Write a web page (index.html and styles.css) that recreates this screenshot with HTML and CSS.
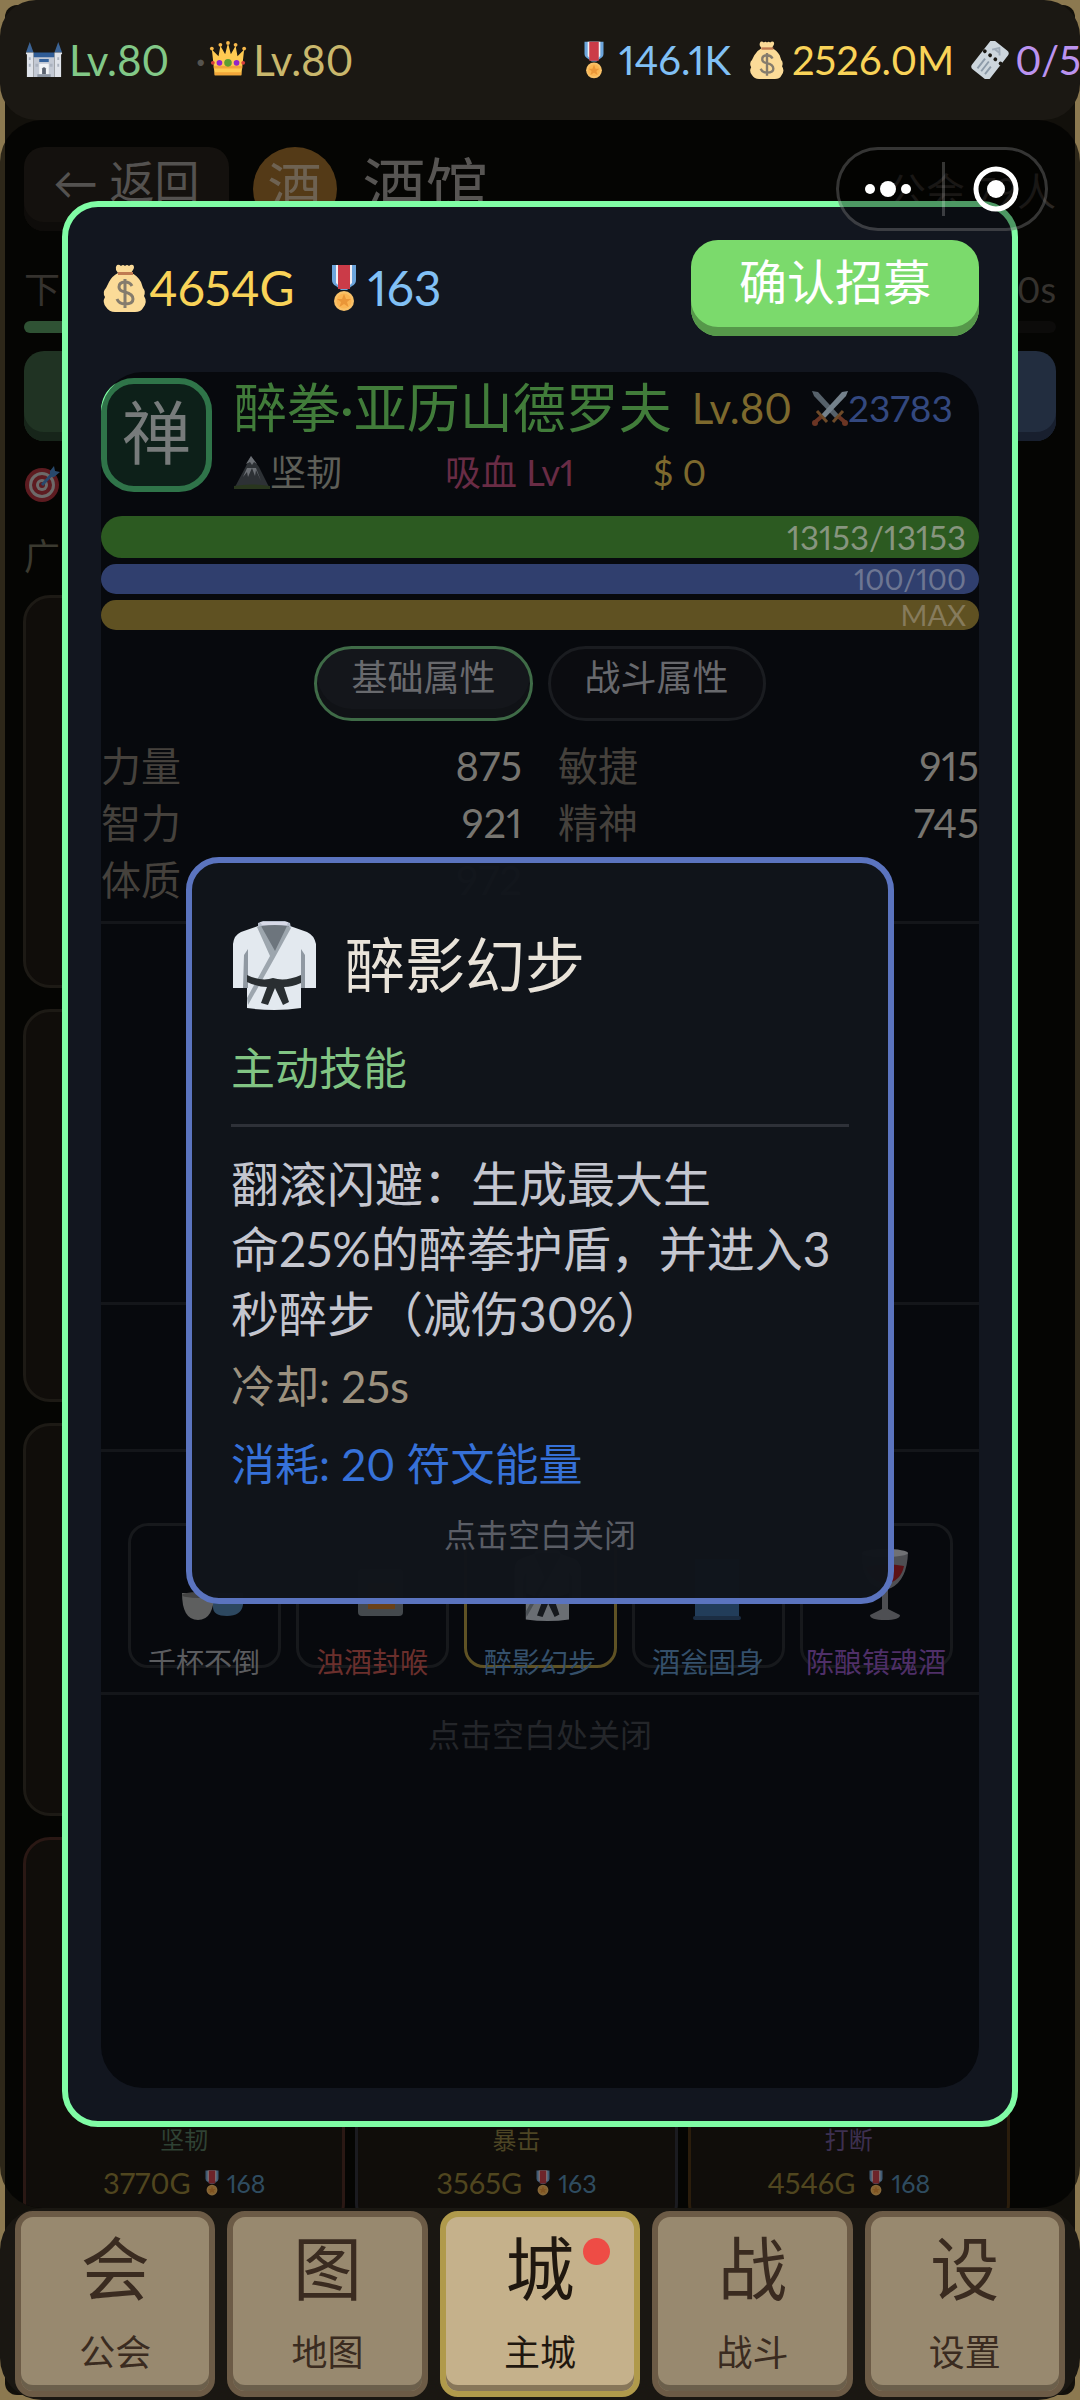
FILE: index.html
```html
<!DOCTYPE html>
<html lang="zh-CN">
<head>
<meta charset="utf-8">
<meta name="viewport" content="width=device-width, initial-scale=1">
<title>酒馆</title>
<link rel="stylesheet" href="styles.css">
</head>
<body>
<svg class="defs" aria-hidden="true">
  <symbol id="castle" viewBox="0 0 40 40">
    <path fill="#3c6496" d="M5 1l4 11H1zM35 1l4 11h-8z"/>
    <path fill="#2f5c96" d="M9 12h22v6H9z"/>
    <path fill="#dfe3ea" d="M1 12h8v26H2V14H1zM31 12h8v2h-1v24h-7z"/>
    <path fill="#c3c9d4" d="M9 17h22v21H9z"/>
    <path fill="#aab2bf" d="M4 17h2v3H4zM34 17h2v3h-2zM4 24h2v3H4zM34 24h2v3h-2zM11 24h3v3h-3zM26 24h3v3h-3z"/>
    <path fill="#35639c" d="M15 19h10v3H15z"/>
    <path fill="#f2f4f7" d="M15 24h10v11H15z"/>
    <path fill="#5b6370" d="M18 35v-6q2-3 4 0v6z"/>
    <path fill="#8d96a3" d="M13 35h14v3H13z"/>
  </symbol>
  <symbol id="crown" viewBox="0 0 40 40">
    <path fill="#ffca52" d="M3 9l7 7 2-11 5 9 3-12 3 12 5-9 2 11 7-7-3 27H6z"/>
    <path fill="#f2a63a" d="M5 26h30v3H5zM6 33h28v3H6z"/>
    <g fill="#f7b84a"><circle cx="3" cy="8" r="2"/><circle cx="12" cy="4" r="2"/><circle cx="20" cy="2" r="2"/><circle cx="28" cy="4" r="2"/><circle cx="37" cy="8" r="2"/></g>
    <circle cx="20" cy="23" r="4" fill="#5c9e31"/><circle cx="11" cy="23" r="3" fill="#9224c9"/><circle cx="29" cy="23" r="3" fill="#9224c9"/>
    <circle cx="4" cy="23" r="2" fill="#d73c3c"/><circle cx="36" cy="23" r="2" fill="#d73c3c"/>
  </symbol>
  <symbol id="medal" viewBox="0 0 48 48">
    <path fill="#6ca5dc" d="M12 1h24v15q0 4-4 6l-5 4h-6l-5-4q-4-2-4-6z"/>
    <path fill="#f1eef4" d="M16 1h16v18l-5 5h-6l-5-5z"/>
    <path fill="#cb3b48" d="M18 1h12v24H18z"/>
    <circle cx="24" cy="37" r="10" fill="#f9c168"/><circle cx="24" cy="37" r="7.500" fill="#fbb451"/>
    <path fill="#ea9638" d="M24 30l2 5h5l-4 3 1.500 5L24 40l-4.500 3 1.500-5-4-3h5z"/>
  </symbol>
  <symbol id="bag" viewBox="0 0 48 48">
    <path fill="#fbdb98" d="M16 1q2-1 4 1 2-2 4 0 2-2 4 0 2-2 4-1 2 2 0 5l-2 3q6 2 10 9l2 6q3 3 1 8 4 6-1 12-2 4-8 4H14q-6 0-9-5-4-5-1-10-3-5 1-9l3-6q3-6 9-9l-2-3q-1-3 1-5z"/>
    <path fill="#c07b52" d="M17 8h15v3H17z"/>
    <path fill="none" stroke="#857c6d" stroke-width="3" d="M31 22q-2-4-7-4-6 0-6 5 0 4 6 5 8 2 8 7 0 5-8 5-6 0-8-5M24 15v29"/>
  </symbol>
  <symbol id="ticket" viewBox="0 0 40 40">
    <g transform="rotate(-52 20 20)"><rect x="1" y="8" width="38" height="24" rx="4" fill="#cdd6dd"/>
    <path stroke="#8d9ba9" stroke-width="2" d="M5 15h13M5 20h13M5 25h10" fill="none"/>
    <path stroke="#9fabb8" stroke-width="2" fill="none" d="M30 15l6 5-6 5M32 17v7"/>
    <g fill="#1b1813"><circle cx="24" cy="10" r="2"/><circle cx="24" cy="17" r="2"/><circle cx="24" cy="24" r="2"/><circle cx="24" cy="31" r="2"/></g></g>
  </symbol>
  <symbol id="gi" viewBox="0 0 90 90">
    <path fill="#6d757d" d="M28 4h30L44 37z"/>
    <path fill="#e3e9ef" d="M27 6L10 12Q3 15 2 24v44h14V88q28 4 54 0V68h15V24q-2-9-9-12L59 6 43 36z"/>
    <path fill="#b6bdcb" d="M27 3l5-2h22l5 2 1 5-4-2q-12-2-25 0l-4 2z"/>
    <path fill="#d7d9e7" d="M29 2h28l-1 3H31z"/>
    <path fill="#9da6ae" d="M26 7l4-1 14 25L56 6l4 2-17 31-26 46-1-7 23-42z"/>
    <path fill="#9099a2" d="M12 68l1-33 4-6v39zM70 68V29l4 6v33z"/>
    <path fill="#292e31" d="M16 55q15 7 26 3 12 4 28-3v8q-9 4-17 4l5 15-6 3-8-17-7 17-7-2 6-16q-9 0-20-5z"/>
  </symbol>
  <symbol id="mountain" viewBox="0 0 36 36">
    <path fill="#2d3135" d="M1 33L11 14l6-12 8 11 10 20z"/>
    <path fill="#6c7075" d="M17 2l-5 8 4-2 2 3 2-3 3 2zM13 14l-4 9 4-5 1 5 4-9 3 8 1-6 5 11-5-13z"/>
    <path fill="#29361e" d="M0 32q17-3 36 0v3H0z"/>
  </symbol>
  <symbol id="swords" viewBox="0 0 36 36">
    <path fill="#56616a" d="M0 1l6 1 21 23-4 3L2 6z"/><path fill="#74818b" d="M36 1l-6 1L9 25l4 3L34 6z"/>
    <path stroke="#6e4a28" stroke-width="3" fill="none" d="M5 21l10 11M31 21L21 32"/>
    <path stroke="#6b3524" stroke-width="4" fill="none" d="M9 27l-7 6M27 27l7 6"/>
    <circle cx="3" cy="33" r="3" fill="#6b3524"/><circle cx="33" cy="33" r="3" fill="#6b3524"/>
  </symbol>
  <symbol id="target" viewBox="0 0 36 36">
    <circle cx="18" cy="19" r="17" fill="#5d1b20"/><circle cx="18" cy="19" r="13" fill="#6d6a69"/><circle cx="18" cy="19" r="10" fill="#5d1b20"/><circle cx="18" cy="19" r="6" fill="#6d6a69"/><circle cx="18" cy="19" r="3" fill="#5d1b20"/>
    <path stroke="#28496d" stroke-width="3" d="M18 19L31 5"/><path fill="#28496d" d="M26 5l4-5 1 5 5 1-6 5h-4z"/>
  </symbol>
  <symbol id="cups" viewBox="0 0 72 72">
    <path fill="#2d4860" d="M35 44h31v12q-2 11-16 11T36 58z"/>
    <path fill="#5e5f5f" d="M5 44h32q0 27-16 27T5 44z"/><ellipse cx="21" cy="46" rx="16" ry="3" fill="#444"/>
  </symbol>
  <symbol id="crate" viewBox="0 0 72 72"><rect x="13" y="20" width="45" height="47" rx="4" fill="#44494d"/><path fill="#6a4117" d="M23 34h27v26H23z"/></symbol>
  <symbol id="jar" viewBox="0 0 72 72"><path fill="#223d5a" d="M14 10h44v58H14z"/><rect x="12" y="67" width="48" height="4" rx="2" fill="#1b2d43"/></symbol>
  <symbol id="wine" viewBox="0 0 72 72">
    <path fill="#4e4f53" d="M13 4q22-6 46 0-1 27-17 35l-3 1v20l12 6q0 5-15 5t-15-5l12-6V40Q12 35 13 4z"/>
    <ellipse cx="36" cy="4" rx="23" ry="4" fill="#707174"/><path fill="#5c1116" d="M17 18q18-5 38-1-3 15-18 18-16-3-20-17z"/>
  </symbol>
</svg>

<div class="app">
  <header class="topbar">
    <div class="levels">
      <span class="chip green"><svg class="i42"><use href="#castle"/></svg>Lv.80</span>
      <span class="dot">·</span>
      <span class="chip khaki"><svg class="i42"><use href="#crown"/></svg>Lv.80</span>
    </div>
    <div class="wallet">
      <span class="chip blue"><svg class="i42"><use href="#medal"/></svg>146.1K</span>
      <span class="chip gold"><svg class="i42"><use href="#bag"/></svg>2526.0M</span>
      <span class="chip violet"><svg class="i42"><use href="#ticket"/></svg>0/5</span>
    </div>
  </header>

  <main class="page">
    <div class="page-head">
      <button class="back" type="button">← 返回</button>
      <span class="badge">酒</span>
      <h1>酒馆</h1>
      <span class="guild">公会 79人</span>
    </div>
    <div class="timer"><span>下</span><span>0s</span></div>
    <div class="progress"><div class="fill"></div></div>
    <div class="actions"><button class="act-green" type="button" aria-label="刷新"></button><button class="act-blue" type="button" aria-label="广告"></button></div>
    <div class="target"><svg class="i36"><use href="#target"/></svg></div>
    <div class="ad">广告</div>
    <div class="cards">
      <div class="card"></div><div class="card"></div><div class="card"></div>
      <div class="card"></div><div class="card"></div><div class="card"></div>
      <div class="card"></div><div class="card"></div><div class="card"></div>
      <div class="card red"><span class="trait t-green">坚韧</span><span class="price">3770G <svg class="i26"><use href="#medal"/></svg><b>168</b></span></div>
      <div class="card slate"><span class="trait t-gold">暴击</span><span class="price">3565G <svg class="i26"><use href="#medal"/></svg><b>163</b></span></div>
      <div class="card amber"><span class="trait t-violet">打断</span><span class="price">4546G <svg class="i26"><use href="#medal"/></svg><b>168</b></span></div>
    </div>
  </main>

  <nav class="tabs">
    <button type="button"><span class="big">会</span><span class="small">公会</span></button>
    <button type="button"><span class="big">图</span><span class="small">地图</span></button>
    <button type="button" class="active"><span class="big">城</span><span class="small">主城</span><i class="red-dot"></i></button>
    <button type="button"><span class="big">战</span><span class="small">战斗</span></button>
    <button type="button"><span class="big">设</span><span class="small">设置</span></button>
  </nav>

  <section class="modal">
    <div class="modal-head">
      <span class="cost gold"><svg class="i48"><use href="#bag"/></svg>4654G</span>
      <span class="cost blue"><svg class="i48"><use href="#medal"/></svg>163</span>
      <button class="confirm" type="button">确认招募</button>
    </div>
    <div class="panel">
      <div class="hero">
        <div class="avatar">禅<svg class="glint" viewBox="0 0 36 36"><path d="M0 33A33 33 0 0 1 15 5A45 45 0 0 0 0 33z"/></svg></div>
        <div class="hero-info">
          <div class="hero-name"><h2>醉拳·亚历山德罗夫</h2><span class="lv">Lv.80</span><span class="power"><svg class="i36"><use href="#swords"/></svg>23783</span></div>
          <div class="hero-tags"><span class="tag"><svg class="i36"><use href="#mountain"/></svg>坚韧</span><span class="pink">吸血 Lv1</span><span class="lv2">$ 0</span></div>
        </div>
      </div>
      <div class="bars">
        <div class="bar hp">13153/13153</div>
        <div class="bar mp">100/100</div>
        <div class="bar xp">MAX</div>
      </div>
      <div class="switch">
        <button class="on" type="button">基础属性</button>
        <button type="button">战斗属性</button>
      </div>
      <dl class="stats">
        <div><dt>力量</dt><dd>875</dd></div><div><dt>敏捷</dt><dd>915</dd></div>
        <div><dt>智力</dt><dd>921</dd></div><div><dt>精神</dt><dd>745</dd></div>
        <div><dt>体质</dt><dd>972</dd></div>
      </dl>
      <div class="sect tall"></div>
      <div class="sect"></div>
      <div class="skills">
        <div class="skill"><svg><use href="#cups"/></svg><span>千杯不倒</span></div>
        <div class="skill s-red"><svg><use href="#crate"/></svg><span>浊酒封喉</span></div>
        <div class="skill s-blue picked"><svg class="dim" viewBox="0 0 90 90"><use href="#gi"/></svg><span>醉影幻步</span></div>
        <div class="skill s-blue"><svg><use href="#jar"/></svg><span>酒瓮固身</span></div>
        <div class="skill s-violet"><svg><use href="#wine"/></svg><span>陈酿镇魂酒</span></div>
      </div>
      <p class="panel-hint">点击空白处关闭</p>

      <div class="layer">
        <article class="popup">
          <div class="popup-head"><svg class="i90"><use href="#gi"/></svg><h3>醉影幻步</h3></div>
          <p class="kind">主动技能</p>
          <hr>
          <p class="desc">翻滚闪避：生成最大生<br>命25%的醉拳护盾，并进入3<br>秒醉步（减伤30%）</p>
          <p class="cooldown">冷却: 25s</p>
          <p class="energy">消耗: 20 符文能量</p>
          <p class="popup-hint">点击空白关闭</p>
        </article>
      </div>
    </div>
  </section>

  <div class="capsule">
    <button type="button" aria-label="更多"><svg width="46" height="18" viewBox="0 0 46 18" fill="#fff"><circle cx="5" cy="9" r="5"/><circle cx="23" cy="9" r="8"/><circle cx="41" cy="9" r="5"/></svg></button>
    <button type="button" aria-label="关闭"><svg width="46" height="46" viewBox="0 0 46 46"><circle cx="23" cy="23" r="20" fill="none" stroke="#fff" stroke-width="5"/><circle cx="23" cy="23" r="9" fill="#fff"/></svg></button>
  </div>
</div>
</body>
</html>
```
FILE: styles.css
```css
* { box-sizing: border-box; }
body {
  margin: 0;
  background: #8c7950;
  font-family: Lato, "Noto Sans CJK SC", sans-serif;
  font-variant-numeric: proportional-nums;
}
h1, h2, h3, p, dl, dd { margin: 0; font-weight: 400; }
button { font: inherit; color: inherit; border: 0; padding: 0; background: none; }
svg { display: block; flex: none; }
.defs { display: none; }
.i26 { width: 26px; height: 26px; }
.i36 { width: 36px; height: 36px; }
.i42 { width: 42px; height: 38px; }
.i48 { width: 48px; height: 48px; }
.i90 { width: 90px; height: 90px; }

.app {
  position: relative;
  z-index: 0;
  display: flex;
  flex-direction: column;
  height: 100vh;
  overflow: hidden;
}
.app::before {
  content: "";
  position: absolute;
  inset: 5px;
  z-index: -1;
  border-radius: 12px;
  background: #12100b;
}

/* top bar */
.topbar {
  display: flex;
  align-items: center;
  min-height: 120px;
  padding-left: 23px;
  border-radius: 36px;
  background: #1b1813;
  overflow: hidden;
  font-size: 42px;
  line-height: 48px;
  white-space: nowrap;
}
.levels { display: flex; flex: 0 0 52%; }
.wallet { display: flex; gap: 15px; font-size: 40px; }
.chip { display: flex; align-items: center; gap: 4px; }
.dot { width: 38px; padding-left: 26px; color: #55534f; }
.green { color: #82c887; }
.khaki { color: #c9b76c; }
.blue { color: #81c0f5; }
.gold { color: #f9d358; }
.violet { color: #bb93f0; }

/* tavern page */
.page {
  flex: 1;
  min-height: 0;
  overflow: hidden;
  padding: 27px 24px 0;
  border-radius: 42px;
  background: rgba(0, 0, 0, .68);
}
.page-head { display: flex; align-items: center; }
.back {
  padding: 11px 29px 25px;
  border-radius: 20px;
  background: #14110e;
  box-shadow: inset 0 -9px #0e0c0a;
  color: #545250;
  font-size: 45px;
  line-height: 48px;
}
.badge {
  width: 84px;
  margin-left: 24px;
  border-radius: 50%;
  background: #543a17;
  color: #6e6252;
  font-size: 54px;
  line-height: 82px;
  height: 84px;
  text-align: center;
}
h1 { margin-left: 26px; color: #575553; font-size: 63px; line-height: 78px; padding-bottom: 6px; }
.guild { margin-left: auto; color: #2b2723; font-size: 39px; }
.timer {
  display: flex;
  justify-content: space-between;
  margin-top: 34px;
  color: #35322e;
  font-size: 36px;
  line-height: 48px;
}
.progress { margin-top: 8px; height: 12px; border-radius: 6px; background: #0c0b0a; }
.fill { width: 40%; height: 12px; border-radius: 6px; background: #2f5234; }
.actions { display: grid; grid-template-columns: 1fr 1fr; gap: 24px; margin-top: 18px; }
.actions button { min-height: 90px; border-radius: 20px; }
.act-green { background: #203323; box-shadow: inset 0 -9px #17251a; }
.act-blue { background: #222d3f; box-shadow: inset 0 -9px #181f2e; }
.target { margin-top: 25px; }
.ad { margin-top: 30px; color: #3b3a30; font-size: 36px; line-height: 48px; }
.cards {
  display: grid;
  grid-template-columns: repeat(3, 1fr);
  gap: 21px 10px;
  margin: 15px 0 0 -1px;
  padding-right: 46px;
}
.card {
  display: flex;
  flex-direction: column;
  align-items: center;
  justify-content: flex-end;
  min-height: 393px;
  padding-bottom: 26px;
  border: 3px solid #1d1a15;
  border-radius: 27px;
  background: #100d0a;
}
.card.red { border-color: #2a1814; }
.card.slate { border-color: #1b1b20; }
.card.amber { border-color: #2b1d0c; }
.trait { font-size: 24px; line-height: 30px; margin-bottom: 10px; }
.t-green { color: #2f4234; }
.t-gold { color: #4d4524; }
.t-violet { color: #3d3050; }
.price { display: flex; align-items: center; color: #50461f; font-size: 29px; line-height: 36px; }
.price svg { margin: 0 2px 0 8px; opacity: .5; }
.price b { color: #2f4c60; font-size: 25px; font-weight: 400; }

/* bottom navigation */
.tabs {
  display: grid;
  grid-template-columns: repeat(5, 1fr);
  gap: 12px;
  padding: 3px 15px;
  border-radius: 42px;
  background: #1a1712;
}
.tabs button {
  position: relative;
  display: flex;
  flex-direction: column;
  align-items: center;
  gap: 21px;
  padding: 12px 0 17px;
  border: 6px solid #6c5b46;
  border-radius: 18px;
  background: #98896f;
  box-shadow: inset 0 -6px #6b5f4b;
  color: #3a2b20;
}
.tabs .active { border-color: #b09a4b; background: #c5b18b; box-shadow: inset 0 -6px #877659; color: #1f170f; }
.big { font-size: 69px; line-height: 80px; }
.small { font-size: 36px; line-height: 44px; }
.red-dot { position: absolute; top: 21px; right: 24px; width: 27px; height: 27px; border-radius: 50%; background: #ee4c45; }

/* recruit dialog */
.modal {
  position: absolute;
  inset: 201px 62px 273px;
  display: flex;
  flex-direction: column;
  gap: 36px;
  padding: 33px;
  border: 6px solid #80fda5;
  border-radius: 36px;
  background: #12161f;
}
.modal-head { display: flex; align-items: center; gap: 25px; font-size: 48px; line-height: 60px; }
.cost { display: flex; align-items: center; }
.confirm {
  margin-left: auto;
  padding: 12px 48px 24px;
  border-radius: 27px;
  background: #7bda6c;
  box-shadow: inset 0 -9px #56984a;
  color: #fff;
}
.panel { position: relative; flex: 1; padding-top: 6px; border-radius: 42px; background: #07090d; }
.hero { display: flex; gap: 22px; }
.avatar {
  position: relative;
  flex: none;
  width: 111px;
  border: 6px solid #2f7449;
  border-radius: 33px;
  background: #0d2019;
  color: #777b7b;
  font-size: 69px;
  line-height: 98px;
  padding-bottom: 4px;
  text-align: center;
}
.glint { position: absolute; left: -6px; top: -6px; width: 36px; height: 36px; fill: #80fda5; }
.hero-info { flex: 1; }
.hero-name { display: flex; align-items: center; gap: 20px; line-height: 60px; white-space: nowrap; }
h2 { color: #417c3a; font-size: 53px; line-height: 60px; }
.lv { color: #7d692d; font-size: 42px; }
.power { display: flex; align-items: center; color: #33487f; font-size: 37px; }
.hero-tags {
  display: grid;
  grid-template-columns: 211px 208px auto;
  margin-top: 14px;
  font-size: 36px;
  line-height: 40px;
}
.tag { display: flex; align-items: center; color: #5e5f58; }
.pink { color: #692c45; }
.lv2 { color: #7d692d; }
.bars { display: grid; gap: 6px; margin-top: 24px; }
.bar { padding-right: 13px; border-radius: 21px; font-size: 29px; line-height: 30px; text-align: right; }
.hp { background: #2c5a21; color: #87957f; font-size: 33px; line-height: 42px; }
.mp { background: #303f6e; color: #6d7692; }
.xp { background: #5f5122; color: #867b5c; }
.switch { display: flex; justify-content: center; gap: 15px; margin-top: 16px; }
.switch button {
  padding: 7px 34px 20px;
  border: 3px solid #1a1c20;
  border-radius: 38px;
  background: #0b0c10;
  color: #68696d;
  font-size: 36px;
  line-height: 42px;
}
.switch .on { border-color: #3f6b47; background: #14161b; box-shadow: inset 0 -9px #101216; }
.stats {
  display: grid;
  grid-template-columns: 1fr 1fr;
  column-gap: 36px;
  margin-top: 17px;
  padding-bottom: 12px;
  border-bottom: 3px solid #14161a;
  font-size: 40px;
  line-height: 57px;
}
.stats div { display: flex; justify-content: space-between; }
dt { color: #45413c; }
dd { color: #777570; }
.sect { min-height: 147px; border-bottom: 3px solid #14161a; }
.tall { min-height: 381px; }
.skills {
  display: flex;
  justify-content: center;
  gap: 15px;
  padding: 71px 0 24px;
  border-bottom: 3px solid #14161a;
}
.skill {
  display: flex;
  flex-direction: column;
  align-items: center;
  gap: 26px;
  width: 153px;
  height: 145px;
  padding-top: 23px;
  border: 3px solid #17191c;
  border-radius: 20px;
  color: #5b5c5f;
  font-size: 28px;
  line-height: 30px;
  white-space: nowrap;
}
.skill svg { width: 72px; height: 72px; margin-left: 18px; }
.skill .dim { opacity: .45; }
.picked { border-color: #5f5224; }
.s-red { color: #6b2f2c; }
.s-blue { color: #34506b; }
.s-violet { color: #4f2f68; }
.panel-hint { padding-top: 20px; color: #24262a; font-size: 32px; line-height: 40px; text-align: center; }

/* skill description popup */
.layer { position: absolute; inset: 0; display: flex; align-items: center; justify-content: center; }
.popup {
  width: 708px;
  padding: 57px 39px 43px;
  border: 6px solid #5b74bf;
  border-radius: 33px;
  background: rgba(16, 20, 27, .98);
}
.popup-head { display: flex; align-items: center; gap: 24px; }
h3 { color: #e9e3d9; font-size: 60px; line-height: 72px; }
.kind { margin-top: 32px; color: #81c483; font-size: 44px; line-height: 52px; }
hr { margin: 30px 0 24px; border: 0; height: 3px; background: #2e3138; }
.desc { color: #c4c6cf; font-size: 48px; line-height: 65px; }
.cooldown { margin-top: 14px; color: #9c917e; font-size: 44px; line-height: 52px; }
.energy { margin-top: 26px; color: #3671d8; font-size: 44px; line-height: 52px; }
.popup-hint { margin-top: 25px; color: #5a5d65; font-size: 32px; line-height: 40px; text-align: center; }

/* host app capsule */
.capsule {
  position: absolute;
  top: 147px;
  right: 32px;
  display: flex;
  width: 212px;
  height: 84px;
  border: 3px solid rgba(255, 255, 255, .2);
  border-radius: 42px;
  background: rgba(0, 0, 0, .4);
}
.capsule button { flex: 1; display: flex; align-items: center; justify-content: center; padding-right: 5px; }
.capsule button + button { position: relative; padding: 0 0 0 5px; }
.capsule button + button::before {
  content: "";
  position: absolute;
  left: 0;
  top: 12px;
  bottom: 12px;
  width: 3px;
  background: rgba(255, 255, 255, .2);
}
```
